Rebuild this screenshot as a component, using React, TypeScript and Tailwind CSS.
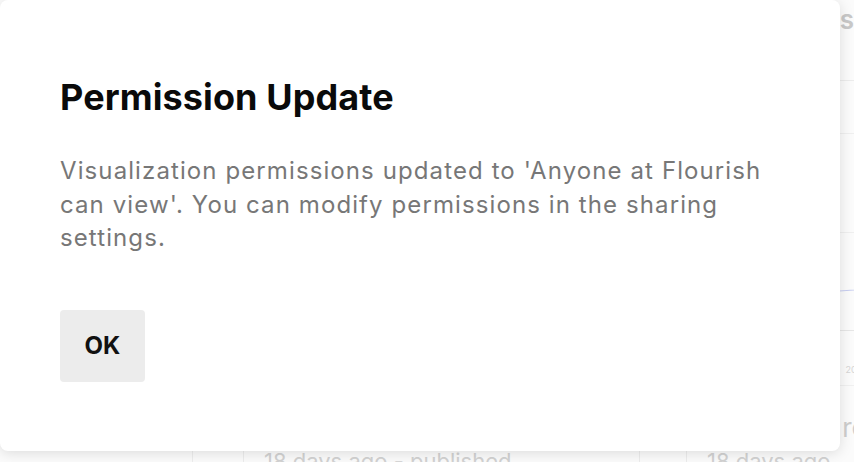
export default function App() {
  return (
    <div className="relative w-[854px] h-[462px] overflow-hidden bg-[#fbfbfb] font-['Inter',sans-serif]">
      {/* Background page (dimmed behind the modal) */}
      <div className="flex h-full">
        <div className="w-[193px] shrink-0 border-r border-[#ededed]" />
        <div className="flex min-w-0 flex-1 flex-col pl-[50px]">
          <div className="flex h-[80px] shrink-0 items-start justify-end pt-[4px]">
            <span className="text-[26px] font-semibold leading-[32px] text-[#c8c8c8]">Visualizations</span>
          </div>
          <div className="flex gap-[46px]">
            {[
              { title: 'Survey results by region', meta: '18 days ago - published' },
              { title: 'Sales over region', meta: '18 days ago' },
            ].map((c) => (
              <div key={c.title} className="flex w-[397px] shrink-0 flex-col border-x border-t border-[#ececec]">
                <div className="h-[305px] border-b border-[#f0f0f0] px-[20px] pt-[52px]">
                  <div className="flex h-[198px] flex-col justify-between">
                    <div className="border-t border-[#efefef]" />
                    <div className="border-t border-[#efefef]" />
                    <div className="relative border-t border-[#e6e6e6]">
                      <svg className="absolute bottom-[26px] left-0 h-[60px] w-[357px]" viewBox="0 0 357 60" fill="none">
                        <path d="M0 55 C 80 50, 150 45, 220 40 S 330 20, 357 2" stroke="#c7cdf0" strokeWidth="1.2" />
                      </svg>
                    </div>
                  </div>
                  <div className="flex justify-between pt-[34px] text-[9px] leading-[10px] text-[#d6d6d6]">
                    <span>2015</span>
                    <span>2016</span>
                    <span>2017</span>
                    <span>2018</span>
                    <span>2019</span>
                    <span>10</span>
                  </div>
                </div>
                <div className="px-[20px] pt-[26px]">
                  <div className="whitespace-nowrap text-[26px] leading-[32px] text-[#cdcdcd]">{c.title}</div>
                  <div className="whitespace-nowrap pt-[2px] text-[22px] leading-[30px] text-[#d2d2d2]">{c.meta}</div>
                </div>
              </div>
            ))}
          </div>
        </div>
      </div>

      {/* Modal */}
      <div className="absolute left-0 top-0 flex h-[451px] w-[840px] flex-col rounded-[8px] bg-white pl-[60px] pr-[60px] pt-[75px] shadow-[0_2px_14px_rgba(0,0,0,0.13)]">
        <h2 className="text-[36px] font-bold leading-[44px] tracking-[0.1px] text-[#0a0a0a]">Permission Update</h2>
        <p className="mt-[35px] text-[24px] leading-[33.5px] tracking-[1.1px] text-[#777]">
          Visualization permissions updated to 'Anyone at Flourish can view'. You can modify permissions in the sharing settings.
        </p>
        <div className="mt-[55px] flex">
          <button className="flex h-[72px] w-[85px] items-center justify-center rounded-[4px] bg-[#ececec] text-[24px] font-bold text-[#111]">
            OK
          </button>
        </div>
      </div>
    </div>
  );
}
